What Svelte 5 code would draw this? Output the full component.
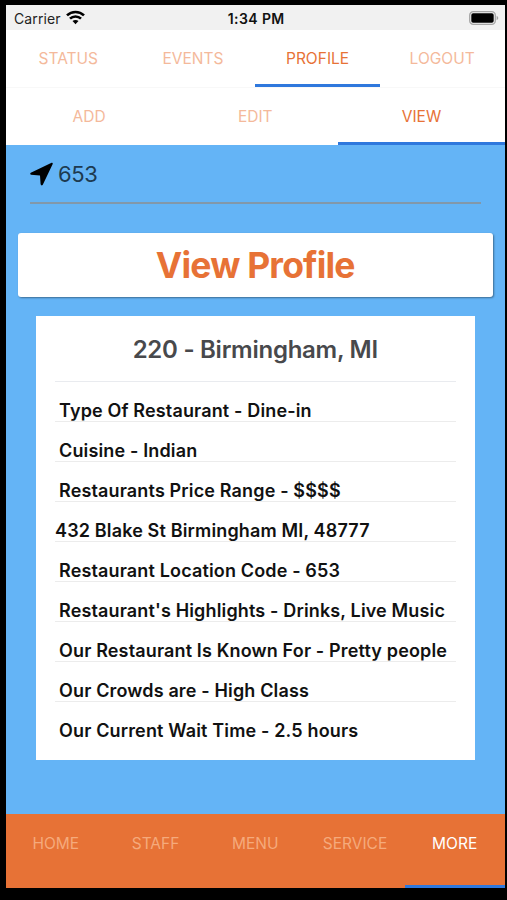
<script>
  let mainTab = 'PROFILE';
  let subTab = 'VIEW';
  let footerTab = 'MORE';

  const mainTabs = ['STATUS', 'EVENTS', 'PROFILE', 'LOGOUT'];
  const subTabs = ['ADD', 'EDIT', 'VIEW'];
  const footerTabs = ['HOME', 'STAFF', 'MENU', 'SERVICE', 'MORE'];

  const details = [
    { text: 'Type Of Restaurant - Dine-in' },
    { text: 'Cuisine - Indian' },
    { text: 'Restaurants Price Range - $$$$' },
    { text: '432 Blake St Birmingham MI, 48777', flush: true },
    { text: 'Restaurant Location Code - 653' },
    { text: "Restaurant's Highlights - Drinks, Live Music" },
    { text: 'Our Restaurant Is Known For - Pretty people' },
    { text: 'Our Crowds are - High Class' },
    { text: 'Our Current Wait Time - 2.5 hours' },
  ];
</script>

<div class="screen">
  <header class="status-bar">
    <div class="carrier">
      <span>Carrier</span>
      <svg width="19" height="15" viewBox="0 0 19 15">
        <g fill="none" stroke="#000" stroke-width="2.6">
          <path d="M1 5.4 C5.7 .8 13.3 .8 18 5.4" />
          <path d="M4 8.7 C7 5.7 12 5.7 15 8.7" />
        </g>
        <path d="M6.5 11.1 C8.2 9.5 10.8 9.5 12.5 11.1 L9.5 14.2 Z" />
      </svg>
    </div>
    <span class="time">1:34 PM</span>
    <svg class="battery" width="30" height="14" viewBox="0 0 30 14">
      <rect x=".7" y=".7" width="25.6" height="12.6" rx="3.6" fill="none" stroke="#a5a5a5" stroke-width="1.3" />
      <rect x="2.3" y="2.3" width="22.4" height="9.4" rx="1.8" />
      <path d="M27.6 4.8 Q29.3 5.6 29.3 7 Q29.3 8.4 27.6 9.2 Z" fill="#a5a5a5" />
    </svg>
  </header>

  <nav class="tabs main">
    {#each mainTabs as tab}
      <button type="button" class:active={mainTab === tab} on:click={() => (mainTab = tab)}>{tab}</button>
    {/each}
  </nav>

  <nav class="tabs sub">
    {#each subTabs as tab}
      <button type="button" class:active={subTab === tab} on:click={() => (subTab = tab)}>{tab}</button>
    {/each}
  </nav>

  <main>
    <div class="code-field">
      <svg width="24" height="24" viewBox="0 0 24 24">
        <path d="M21.6 .8 L.8 10.8 Q-.5 12 1 12.8 L10 13.6 L10.6 22.3 Q11.4 24.2 12.8 22.8 L22.7 2 Q23 .4 21.6 .8 Z" />
      </svg>
      <span>653</span>
    </div>

    <h1>View Profile</h1>

    <section class="card">
      <h2>220 - Birmingham, MI</h2>
      <ul>
        {#each details as detail}
          <li class:flush={detail.flush}>{detail.text}</li>
        {/each}
      </ul>
    </section>
  </main>

  <nav class="tabs footer">
    {#each footerTabs as tab}
      <button type="button" class:active={footerTab === tab} on:click={() => (footerTab = tab)}>{tab}</button>
    {/each}
  </nav>
</div>

<style>
  :global(body) {
    margin: 0;
    background: #000;
  }

  .screen {
    box-sizing: border-box;
    display: flex;
    flex-direction: column;
    width: 507px;
    height: 900px;
    padding: 5px 2.5px 12px 6px;
    background: #000;
    font-family: Inter, "Liberation Sans", sans-serif;
  }

  .screen * {
    box-sizing: border-box;
  }

  .status-bar {
    display: grid;
    grid-template-columns: 1fr auto 1fr;
    align-items: center;
    height: 25px;
    padding: 1px 6px 0 8px;
    background: #f1f1f1;
    font-size: 14px;
    color: #222;
  }

  .carrier {
    display: flex;
    align-items: center;
    gap: 5px;
    letter-spacing: 0.1px;
  }

  .carrier svg {
    margin-bottom: 2px;
  }

  .time {
    color: #111;
    font-weight: 600;
    letter-spacing: 0.4px;
  }

  .battery {
    justify-self: end;
    margin-bottom: 1px;
  }

  .tabs {
    display: flex;
    background: #fff;
  }

  .tabs button {
    flex: 1 1 0;
    min-width: 0;
    margin: 0;
    padding: 2px 0 0;
    border: 0;
    border-bottom: 3px solid transparent;
    background: none;
    color: #f4b99b;
    font-family: inherit;
    font-size: 15.5px;
    font-weight: 400;
    cursor: pointer;
  }

  .tabs button.active {
    border-bottom-color: #2f78dd;
    color: #e77236;
  }

  .main {
    height: 58px;
    border-bottom: 1px solid #f8f8f8;
  }

  .sub {
    height: 57px;
  }

  main {
    flex: 1;
    padding: 0 12px;
    background: #64b4f6;
  }

  .code-field {
    display: flex;
    align-items: center;
    gap: 4px;
    height: 59px;
    margin: 0 12px;
    border-bottom: 2px solid #8298aa;
    color: #1d3a50;
    font-size: 22px;
    letter-spacing: -0.4px;
  }

  h1 {
    height: 64px;
    margin: 29px 0 19px;
    border-radius: 3px;
    background: #fff;
    box-shadow: 1px 1px 2px rgba(0, 0, 0, 0.4);
    color: #e77236;
    font-size: 35.5px;
    font-weight: 700;
    letter-spacing: -0.8px;
    line-height: 65px;
    text-align: center;
  }

  .card {
    height: 444px;
    margin: 0 18px;
    padding: 0 19px;
    background: #fff;
  }

  h2 {
    height: 66px;
    margin: 0;
    border-bottom: 1px solid #e9ebef;
    color: #48494c;
    font-size: 24px;
    font-weight: 600;
    letter-spacing: -0.27px;
    line-height: 68px;
    text-align: center;
  }

  ul {
    margin: 0;
    padding: 0;
    list-style: none;
  }

  li {
    height: 40px;
    padding: 18px 0 0 4px;
    border-bottom: 1px solid #ececec;
    color: #111;
    font-size: 18px;
    font-weight: 600;
    letter-spacing: 0.15px;
    line-height: 22px;
    white-space: nowrap;
  }

  li.flush {
    padding-left: 0;
  }

  li:last-child {
    border-bottom: 0;
  }

  .footer {
    height: 74px;
    background: #e77236;
  }

  .footer button {
    padding: 0 0 13px;
    color: #f5aa7c;
  }

  .footer button.active {
    color: #fff;
  }
</style>
